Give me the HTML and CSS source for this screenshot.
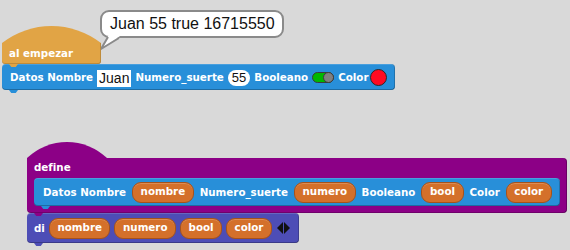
FILE: index.html
```html
<!DOCTYPE html>
<html lang="es">
<head>
    <meta charset="UTF-8">
    <title>Bloques</title>
    <link rel="stylesheet" href="styles.css">
</head>
<body>
    <div class="stage">
        <div class="bubble">
            Juan 55 true 16715550
            <svg class="bubble-tail" width="22" height="16" viewBox="0 0 22 16">
                <polygon points="8,0 20,0 1,13" fill="#fff"/>
                <polyline points="8,1 1,13 19,2" fill="none" stroke="#8a8a8a" stroke-width="2" stroke-linejoin="round"/>
            </svg>
        </div>

        <!-- al empezar -->
        <div class="script script-start">
            <div class="hat">
                <svg class="cap" width="99" height="17" viewBox="0 0 99 17">
                    <path d="M0 17 A81 81 0 0 1 99 17 Z" fill="#e1a445"/>
                </svg>
                <div class="hat-body tab">al empezar</div>
            </div>
            <div class="block block-data row-main tab">
                <span class="label">Datos Nombre</span>
                <span class="text-slot">Juan</span>
                <span class="label">Numero_suerte</span>
                <span class="num-slot">55</span>
                <span class="label">Booleano</span>
                <span class="toggle"><span class="knob"></span></span>
                <span class="label">Color</span>
                <span class="color-slot"></span>
            </div>
        </div>

        <!-- define -->
        <div class="script script-define">
            <div class="define">
                <svg class="cap" width="80" height="16" viewBox="0 0 80 16">
                    <path d="M0 16 A58 58 0 0 1 80 16 Z" fill="#8c0086"/>
                </svg>
                <div class="define-body tab">
                    <div class="define-label">define</div>
                    <div class="block block-data row-proto tab">
                        <span class="label">Datos Nombre</span>
                        <span class="arg">nombre</span>
                        <span class="label">Numero_suerte</span>
                        <span class="arg">numero</span>
                        <span class="label">Booleano</span>
                        <span class="arg">bool</span>
                        <span class="label">Color</span>
                        <span class="arg">color</span>
                    </div>
                </div>
            </div>
            <div class="block block-say tab">
                <span class="label">di</span>
                <span class="arg">nombre</span>
                <span class="arg">numero</span>
                <span class="arg">bool</span>
                <span class="arg">color</span>
                <span class="arrows"><span class="arrow-left"></span><span class="arrow-right"></span></span>
            </div>
        </div>
    </div>
</body>
</html>
```

FILE: styles.css
```css
body {
    margin: 0;
    background: #d9d9d9;
    font-family: "DejaVu Sans", sans-serif;
}

.stage {
    position: relative;
    width: 570px;
    height: 250px;
    overflow: hidden;
}

/* bocadillo */
.bubble {
    position: absolute;
    left: 100px;
    top: 10px;
    height: 28px;
    box-sizing: border-box;
    padding: 0 7px 0 8px;
    background: #fff;
    border: 2px solid #8a8a8a;
    border-radius: 9px;
    font-family: "Liberation Sans", sans-serif;
    font-size: 16px;
    line-height: 24px;
    color: #111;
}

.bubble-tail {
    position: absolute;
    left: -2px;
    top: 24px;
}

/* scripts */
.script {
    position: absolute;
    display: flex;
    flex-direction: column;
    align-items: flex-start;
}

.script-start {
    left: 2px;
    top: 26px;
}

.script-define {
    left: 27px;
    top: 142px;
}

.cap {
    display: block;
}

.hat {
    display: flex;
    flex-direction: column;
}

.hat-body {
    position: relative;
    height: 21px;
    line-height: 20px;
    padding-left: 7px;
    background: #e1a445;
    color: #fff;
    font-size: 10.3px;
    font-weight: bold;
    border-radius: 0 0 3px 3px;
    box-shadow: inset 0 -1px rgba(0, 0, 0, 0.15), inset -1px 0 rgba(0, 0, 0, 0.15);
}

.tab::after {
    content: "";
    position: absolute;
    left: 7px;
    bottom: -3px;
    width: 9px;
    height: 3px;
    background: inherit;
    clip-path: polygon(0 0, 100% 0, 75% 100%, 25% 100%);
    z-index: 1;
}

.block {
    position: relative;
    display: flex;
    align-items: center;
    box-sizing: border-box;
    color: #fff;
    font-size: 10.3px;
    font-weight: bold;
    border-radius: 4px;
    box-shadow: inset 0 1px rgba(255, 255, 255, 0.15), inset 0 -1px rgba(0, 0, 0, 0.25), inset -1px 0 rgba(0, 0, 0, 0.2);
}

.block-data {
    background: #288fd9;
}

.block-say {
    background: #4d4db6;
    height: 30px;
    padding: 0 9px 0 7px;
    gap: 4px;
}

.row-main {
    height: 26px;
    padding: 0 8px;
    gap: 4px;
}

.row-proto {
    height: 28px;
    padding: 0 8px 0 9px;
    gap: 6px;
}

.label {
    white-space: nowrap;
}

.text-slot {
    height: 17px;
    padding: 0 2px;
    background: #fff;
    color: #111;
    font-family: "Liberation Sans", sans-serif;
    font-weight: normal;
    font-size: 14px;
    line-height: 17px;
    margin-top: 3px;
}

.num-slot {
    height: 16px;
    padding: 0 4px;
    background: #fff;
    border-radius: 8px;
    color: #111;
    font-family: "Liberation Sans", sans-serif;
    font-weight: normal;
    font-size: 13px;
    line-height: 16px;
    margin-top: 1px;
}

.toggle {
    display: flex;
    justify-content: flex-end;
    width: 22px;
    height: 11px;
    box-sizing: border-box;
    background: #00b800;
    border: 1px solid #3c3c3c;
    border-radius: 6px;
}

.knob {
    width: 11px;
    height: 11px;
    margin: -1px -1px 0 0;
    box-sizing: border-box;
    background: #808080;
    border: 1px solid #3c3c3c;
    border-radius: 50%;
}

.color-slot {
    width: 17px;
    height: 17px;
    box-sizing: border-box;
    background: #ff0a22;
    border: 1px solid #2a2a2a;
    border-radius: 50%;
    margin-left: -2px;
}

/* define */
.define {
    display: flex;
    flex-direction: column;
    align-items: flex-start;
}

.define-body {
    position: relative;
    padding: 0 7px 7px;
    background: #8c0086;
    border-radius: 0 4px 4px 4px;
    box-shadow: inset 0 -1px rgba(0, 0, 0, 0.2), inset -1px 0 rgba(0, 0, 0, 0.25);
}

.define-label {
    height: 20px;
    line-height: 19px;
    color: #fff;
    font-size: 10.3px;
    font-weight: bold;
}

.arg {
    display: flex;
    align-items: center;
    height: 21px;
    box-sizing: border-box;
    padding: 0 7.5px 2px;
    background: #d4702a;
    border: 1px solid #a5521b;
    border-radius: 9px;
    box-shadow: inset 0 1px rgba(255, 255, 255, 0.2);
    white-space: nowrap;
}

.arrows {
    display: flex;
    gap: 1px;
    margin-left: 1px;
}

.arrow-left,
.arrow-right {
    width: 0;
    height: 0;
    border-top: 6px solid transparent;
    border-bottom: 6px solid transparent;
}

.arrow-left {
    border-right: 6px solid #111;
}

.arrow-right {
    border-left: 6px solid #111;
}
```
